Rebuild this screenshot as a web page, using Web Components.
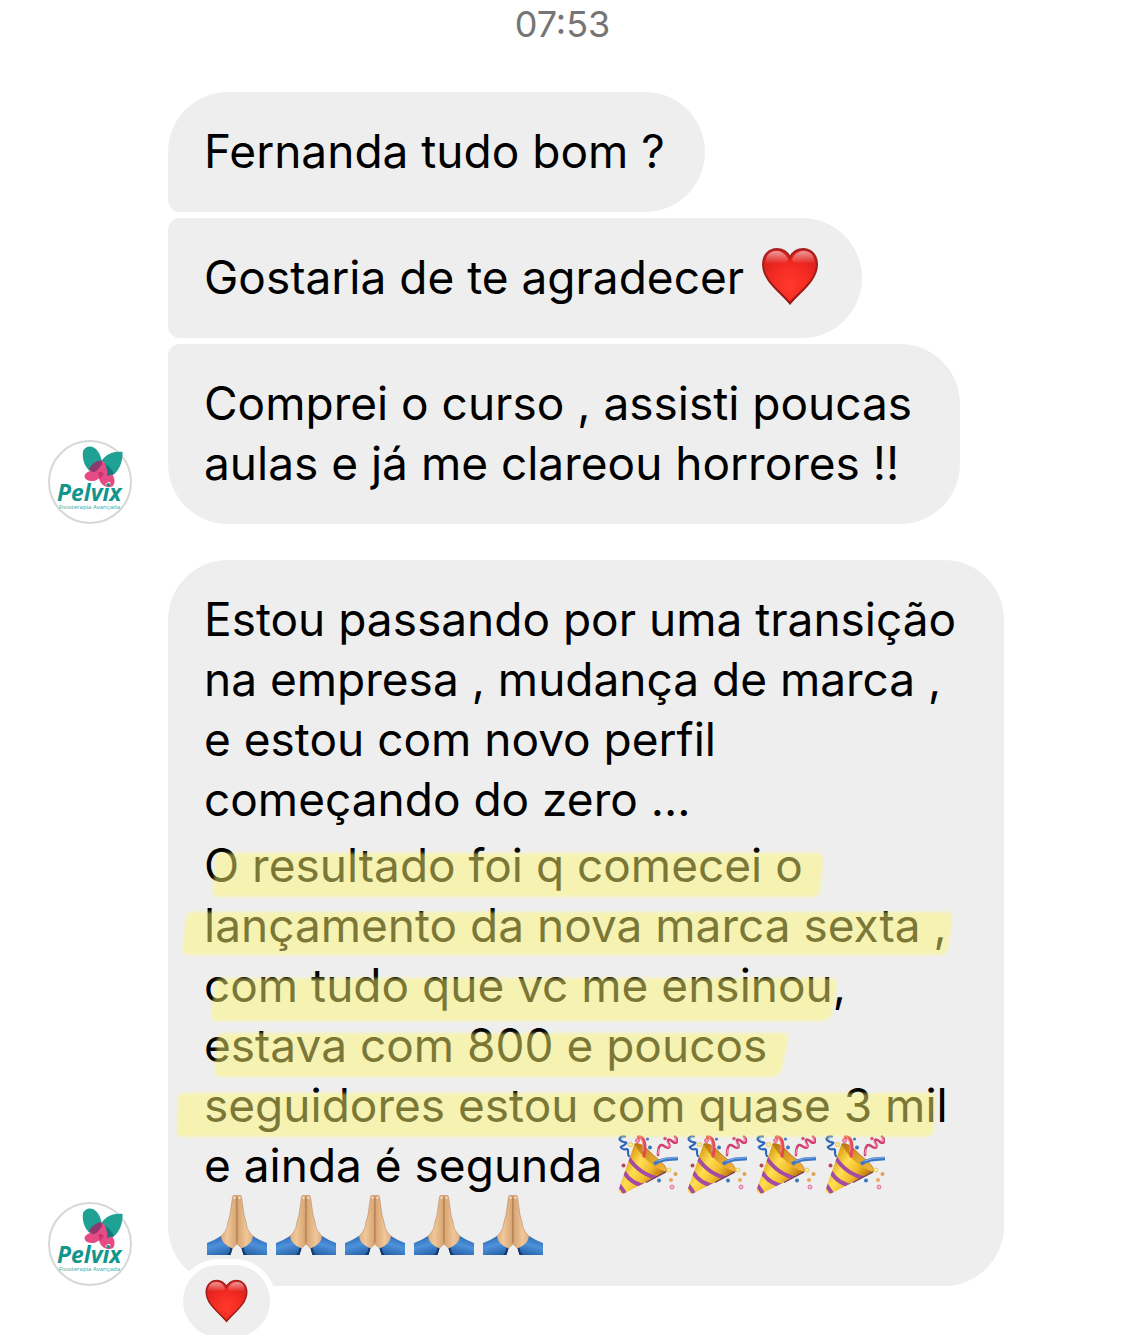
<!DOCTYPE html>
<html lang="pt-BR">
<head>
<meta charset="utf-8">
<meta name="viewport" content="width=device-width, initial-scale=1">
<title>Conversa</title>
<style>
  html, body { margin: 0; background: #fff; }
  body { font-family: Inter, "Liberation Sans", sans-serif; color: #000; }
</style>
</head>
<body>
<chat-thread>
  <chat-time slot="time">07:53</chat-time>
  <chat-group>
    <brand-avatar slot="avatar"></brand-avatar>
    <chat-bubble position="first"><p>Fernanda tudo bom ?</p></chat-bubble>
    <chat-bubble position="middle"><p>Gostaria de te agradecer <emoji-icon name="heart"></emoji-icon></p></chat-bubble>
    <chat-bubble position="last"><p>Comprei o curso , assisti poucas <br>aulas e já me clareou horrores !!</p></chat-bubble>
  </chat-group>
  <chat-group>
    <brand-avatar slot="avatar"></brand-avatar>
    <chat-bubble>
      <p>Estou passando por uma transição <br>na empresa , mudança de marca , <br>e estou com novo perfil <br>começando do zero ...</p>
      <p>O resultado foi q comecei o <br>lançamento da nova marca sexta , <br>com tudo que vc me ensinou, <br>estava com 800 e poucos <br>seguidores estou com quase 3 mil <br>e ainda é segunda <emoji-icon name="party"></emoji-icon><emoji-icon name="party"></emoji-icon><emoji-icon name="party"></emoji-icon><emoji-icon name="party"></emoji-icon><br><emoji-icon name="pray"></emoji-icon><emoji-icon name="pray"></emoji-icon><emoji-icon name="pray"></emoji-icon><emoji-icon name="pray"></emoji-icon><emoji-icon name="pray"></emoji-icon><marker-strokes></marker-strokes></p>
      <chat-reaction slot="reaction"><emoji-icon name="heart" size="small"></emoji-icon></chat-reaction>
    </chat-bubble>
  </chat-group>
</chat-thread>

<script>
const define = (name, html, setup) => customElements.define(name, class extends HTMLElement {
  constructor() {
    super();
    this.attachShadow({ mode: 'open' }).innerHTML = html;
  }
  connectedCallback() { if (setup) setup(this); }
});

define('chat-thread', `
  <style>
    :host { display: block; overflow: hidden; }
    main { display: flex; flex-direction: column; gap: 36px; padding: 0 48px 49px; }
    header { display: flex; justify-content: center; padding-bottom: 8px; }
  </style>
  <main><header><slot name="time"></slot></header><slot></slot></main>`);

define('chat-time', `
  <style>
    :host { display: block; font-size: 36px; line-height: 48px; color: #757575; }
  </style>
  <time><slot></slot></time>`);

define('chat-group', `
  <style>
    :host { display: flex; align-items: flex-end; gap: 36px; }
    section { display: flex; flex-direction: column; align-items: flex-start; gap: 6px; min-width: 0; }
  </style>
  <slot name="avatar"></slot>
  <section><slot></slot></section>`);

define('chat-bubble', `
  <style>
    :host { display: block; position: relative; box-sizing: border-box; max-width: 100%;
      padding: 29px 48px 31px 36px; border-radius: 60px; background: #eee; font-size: 46px; line-height: 60px; }
    :host([position="first"]) { border-bottom-left-radius: 12px; padding-right: 40px; }
    :host([position="middle"]) { border-top-left-radius: 12px; border-bottom-left-radius: 12px; padding-right: 36px; }
    :host([position="last"]) { border-top-left-radius: 12px; }
    .body { display: flex; flex-direction: column; gap: 6px; }
    ::slotted(p) { margin: 0; position: relative; white-space: nowrap; }
  </style>
  <div class="body"><slot></slot></div>
  <slot name="reaction"></slot>`);

define('chat-reaction', `
  <style>
    :host { position: absolute; left: 9px; bottom: -57px; display: flex; align-items: center; justify-content: center;
      box-sizing: content-box; width: 87px; height: 72px; border: 6px solid #fff; border-radius: 42px; background: #eee; }
  </style>
  <slot></slot>`);

/* Translucent felt-tip strokes laid over the highlighted lines */
define('marker-strokes', `
  <style>
    :host { position: absolute; inset: 0; pointer-events: none; }
    svg { display: block; width: 100%; height: 100%; overflow: visible; }
  </style>
  <svg aria-hidden="true">
    <defs><filter id="soft" x="-5%" y="-20%" width="110%" height="140%" color-interpolation-filters="sRGB"><feGaussianBlur stdDeviation="1.6"/></filter></defs>
    <g fill="#fff873" opacity=".48" filter="url(#soft)">
      <path d="M14 18H612Q620 18 619 25L616 56Q615 62 606 62H14Q8 62 9 55L11 28Q11 18 14 18Z"/>
      <path d="M-12 77H742Q749 77 748 84L744 114Q743 120 734 120H-16Q-23 120-21 111L-18 83Q-17 77-12 77Z"/>
      <path d="M16 143H625Q634 143 633 150L628 178Q626 186 616 186H12Q6 186 7 179L11 149Q12 143 16 143Z"/>
      <path d="M18 198H578Q585 198 584 205L578 234Q576 242 567 242H16Q9 242 11 233L13 204Q14 198 18 198Z"/>
      <path d="M-20 258H726Q733 258 732 265L730 295Q729 302 720 302H-21Q-28 302-27 295L-26 265Q-26 258-20 258Z"/>
    </g>
  </svg>`);

const HEART = `
  <defs>
    <radialGradient id="h" cx=".5" cy=".65" r=".65"><stop offset="0" stop-color="#ff3a2c"/><stop offset=".55" stop-color="#f32a22"/><stop offset="1" stop-color="#d91f1c"/></radialGradient>
    <linearGradient id="g" x2="0" y2="1"><stop offset="0" stop-color="#fff" stop-opacity=".55"/><stop offset="1" stop-color="#fff" stop-opacity="0"/></linearGradient>
    <linearGradient id="e" x2="0" y2="1"><stop offset="0" stop-color="#a82420"/><stop offset="1" stop-color="#951611"/></linearGradient>
  </defs>
  <path d="M30 56.500C22 46 3 34 3 17.500 3 8 9 2 17 2c6 0 10.500 3.500 13 8.500C32.500 5.500 37 2 43 2c8 0 14 6 14 15.500C57 34 38 46 30 56.500Z" fill="url(#h)" stroke="url(#e)" stroke-width="2"/>
  <path d="M5.500 17C5 8 10 4 16.500 4c6 0 10 4 11.500 9C26 18 12 14 5.500 17ZM54.500 17c.5-9-4.500-13-11-13-6 0-10 4-11.500 9 2 5 16 1 22.500 4Z" fill="url(#g)"/>`;

const PARTY = `
  <defs>
    <linearGradient id="c" x1=".05" y1=".4" x2=".75" y2=".9"><stop offset="0" stop-color="#d99a13"/><stop offset=".35" stop-color="#ffdf52"/><stop offset=".65" stop-color="#f2be2c"/><stop offset="1" stop-color="#b46b08"/></linearGradient>
    <linearGradient id="i" x1="0" y1="0" x2="1" y2="1"><stop offset="0" stop-color="#b87412"/><stop offset=".5" stop-color="#dfa22c"/><stop offset="1" stop-color="#f3b73b"/></linearGradient>
    <clipPath id="k"><path d="M16.500 9C22 20 35 33 48 37L7 58Q2 60 .5 55Z"/></clipPath>
  </defs>
  <path d="M16.500 9C21 7 28 12 34 19 42 26 50 31 48 37 35 35 20 23 16.500 9Z" fill="url(#i)" stroke="#a76b12" stroke-width=".7"/>
  <path d="M16.500 9C22 20 35 33 48 37L7 58Q2 60 .5 55Z" fill="url(#c)"/>
  <g clip-path="url(#k)" fill="none" stroke="#a44ba5" stroke-width="4">
    <path d="M10 22C17 33 28 41 42 44"/><path d="M6 37C10 44 18 50 29 51"/><path d="M0 49C3 52 6 57 9 61"/>
  </g>
  <path d="M48 37 28 47.500" stroke="#74345b" stroke-width="1.200"/>
  <g fill="none" stroke-linecap="round">
    <path d="M7 1.500C1 1 0 5 4 6.500S10 7 7 9.500 1 11 4 13.500 10 12 10 16 10 20 11 21" stroke="#2c65b9" stroke-width="2.200"/>
    <path d="M5 2Q2 3 5 6" stroke="#67a4e8" stroke-width="1"/>
    <path d="M20.500 2C26 2 28 8 26 21" stroke="#e34c54" stroke-width="3.400"/>
    <path d="M22 2Q26 6 25 16" stroke="#ff9190" stroke-width="1"/>
    <path d="M57 1.500C62 7 57 10 54 6 50 3 49 5 51 9S50 14 46 11 40 12 40 20" stroke="#cf3f70" stroke-width="2.500"/>
    <path d="M56 5Q60 8 57 3M49 7Q53 12 50 12M41 14L40 19" stroke="#ff92b7" stroke-width="1.200"/>
    <path d="M36 29C43 24 50 24 60 23.500" stroke="#3c78c7" stroke-width="3.600" stroke-linecap="butt"/>
    <path d="M39 26Q48 22.500 59 22.500" stroke="#83b4ea" stroke-width="1"/>
  </g>
  <g stroke-width=".8">
    <circle cx="19.500" cy="5.500" r="2" fill="#ff91b8" stroke="#dc4c7d"/><circle cx="29.500" cy="4" r="1.600" fill="#3878c3"/><circle cx="32" cy="12.500" r="2" fill="#3878c3"/>
    <circle cx="12.500" cy="9.500" r="2" fill="#fff19b" stroke="#d8bd36"/><circle cx="47" cy="3.500" r="1.700" fill="#cc4968"/><circle cx="5.500" cy="30.500" r="2" fill="#b9465c"/>
    <circle cx="51" cy="35" r="2" fill="#fff2a5" stroke="#dec14f"/><circle cx="57.500" cy="39" r="2" fill="#dda157"/><circle cx="41" cy="45.500" r="2" fill="#3976c0"/>
    <circle cx="53" cy="45" r="2" fill="#e8a85c"/><circle cx="54" cy="52" r="2" fill="#ffb2d2" stroke="#cf5f9a"/>
  </g>`;

const PRAY = `
  <defs>
    <linearGradient id="s" x1="0" x2="1"><stop offset="0" stop-color="#dca878"/><stop offset=".45" stop-color="#efc799"/><stop offset="1" stop-color="#d6a06e"/></linearGradient>
    <linearGradient id="b" x1=".2" y1="0" x2=".6" y2="1"><stop offset="0" stop-color="#2b65ac"/><stop offset=".5" stop-color="#4c92db"/><stop offset="1" stop-color="#2964aa"/></linearGradient>
    <g id="half">
      <path d="M30.500 2Q30-.3 27.500.5 25.500 0 25.500 2.500L24 13Q23.500 20 21 27 20.500 34 17 38L12 43 15 52 24 54.500 30.500 48.500Z" fill="url(#s)" stroke="#bb865a" stroke-width=".6"/>
      <path d="M27.500 1.500V4" stroke="#f8dfc4" stroke-width="1.800"/>
      <path d="M0 48Q8 45 14 41 14.500 49 25.500 53.500L23.500 60H0Z" fill="url(#b)"/>
      <path d="M25.500 53.500 23.500 60H20Q23 57 23.500 52.500Z" fill="#173a70"/>
    </g>
  </defs>
  <use href="#half"/><use href="#half" transform="matrix(-1 0 0 1 60 0)"/>
  <path d="M30 3V47" stroke="#a9784f" stroke-width=".9"/>`;

const EMOJI = { heart: ['❤️', HEART], party: ['🎉', PARTY], pray: ['🙏🏼', PRAY] };

define('emoji-icon', `
  <style>
    :host { display: inline-flex; vertical-align: top; width: 69px; height: 60px; box-sizing: border-box; padding-left: 3px; }
    :host([size="small"]) { width: 45px; height: 45px; padding: 0; }
    svg { display: block; width: 60px; height: 60px; }
    :host([size="small"]) svg { width: 45px; height: 45px; }
  </style>
  <svg viewBox="0 0 60 60" role="img"></svg>`, el => {
    const [label, art] = EMOJI[el.getAttribute('name')];
    const svg = el.shadowRoot.querySelector('svg');
    svg.setAttribute('aria-label', label);
    svg.innerHTML = art;
  });

define('brand-avatar', `
  <style>
    :host { display: block; flex: none; width: 84px; height: 84px; }
    svg { display: block; width: 100%; height: 100%; }
    .name { font: italic 700 23px "Open Sans", sans-serif; fill: #12968c; }
    .tag { font: 400 6px "Open Sans", sans-serif; fill: #3aa69e; }
  </style>
  <svg viewBox="0 0 84 84">
    <circle cx="42" cy="42" r="41" fill="#fff" stroke="#d6d8d8" stroke-width="2"/>
    <path d="M41 6.500C48 6 53 14 53.500 21 58 14 66 11 74.500 12 75 20 72 30 65 35L58 37 43 32C36 27 34 18 35 11Q37 7 41 6.500Z" fill="#1fa294"/>
    <path d="M53.500 20.500C57 22 58.500 26 59 31 67 34 68 42 65 46 60 49 53 46 51 38.500 47 42 39 42 37 38 35 33 41 32 43 30 45 25 49 20 53.500 20.500Z" fill="#e64b86"/>
    <path d="M41 29C43 25 48 20 53.500 20.500L54 24Q50 31 45 32.500Z" fill="#8c3a6d"/>
    <path d="M57 24Q63 27 66 34L59 36Q60 29 57 24Z" fill="#15787c"/>
    <path d="M50 33Q53 30 56 34L52 39Z" fill="#c93474"/>
    <ellipse cx="60" cy="44" rx="2.600" ry="1.700" transform="rotate(-25 60 44)" fill="#fff"/>
    <text class="name" x="9" y="61">Pelvix</text>
    <text class="tag" x="11" y="69">Fisioterapia Avançada</text>
  </svg>`);
</script>
</body>
</html>
